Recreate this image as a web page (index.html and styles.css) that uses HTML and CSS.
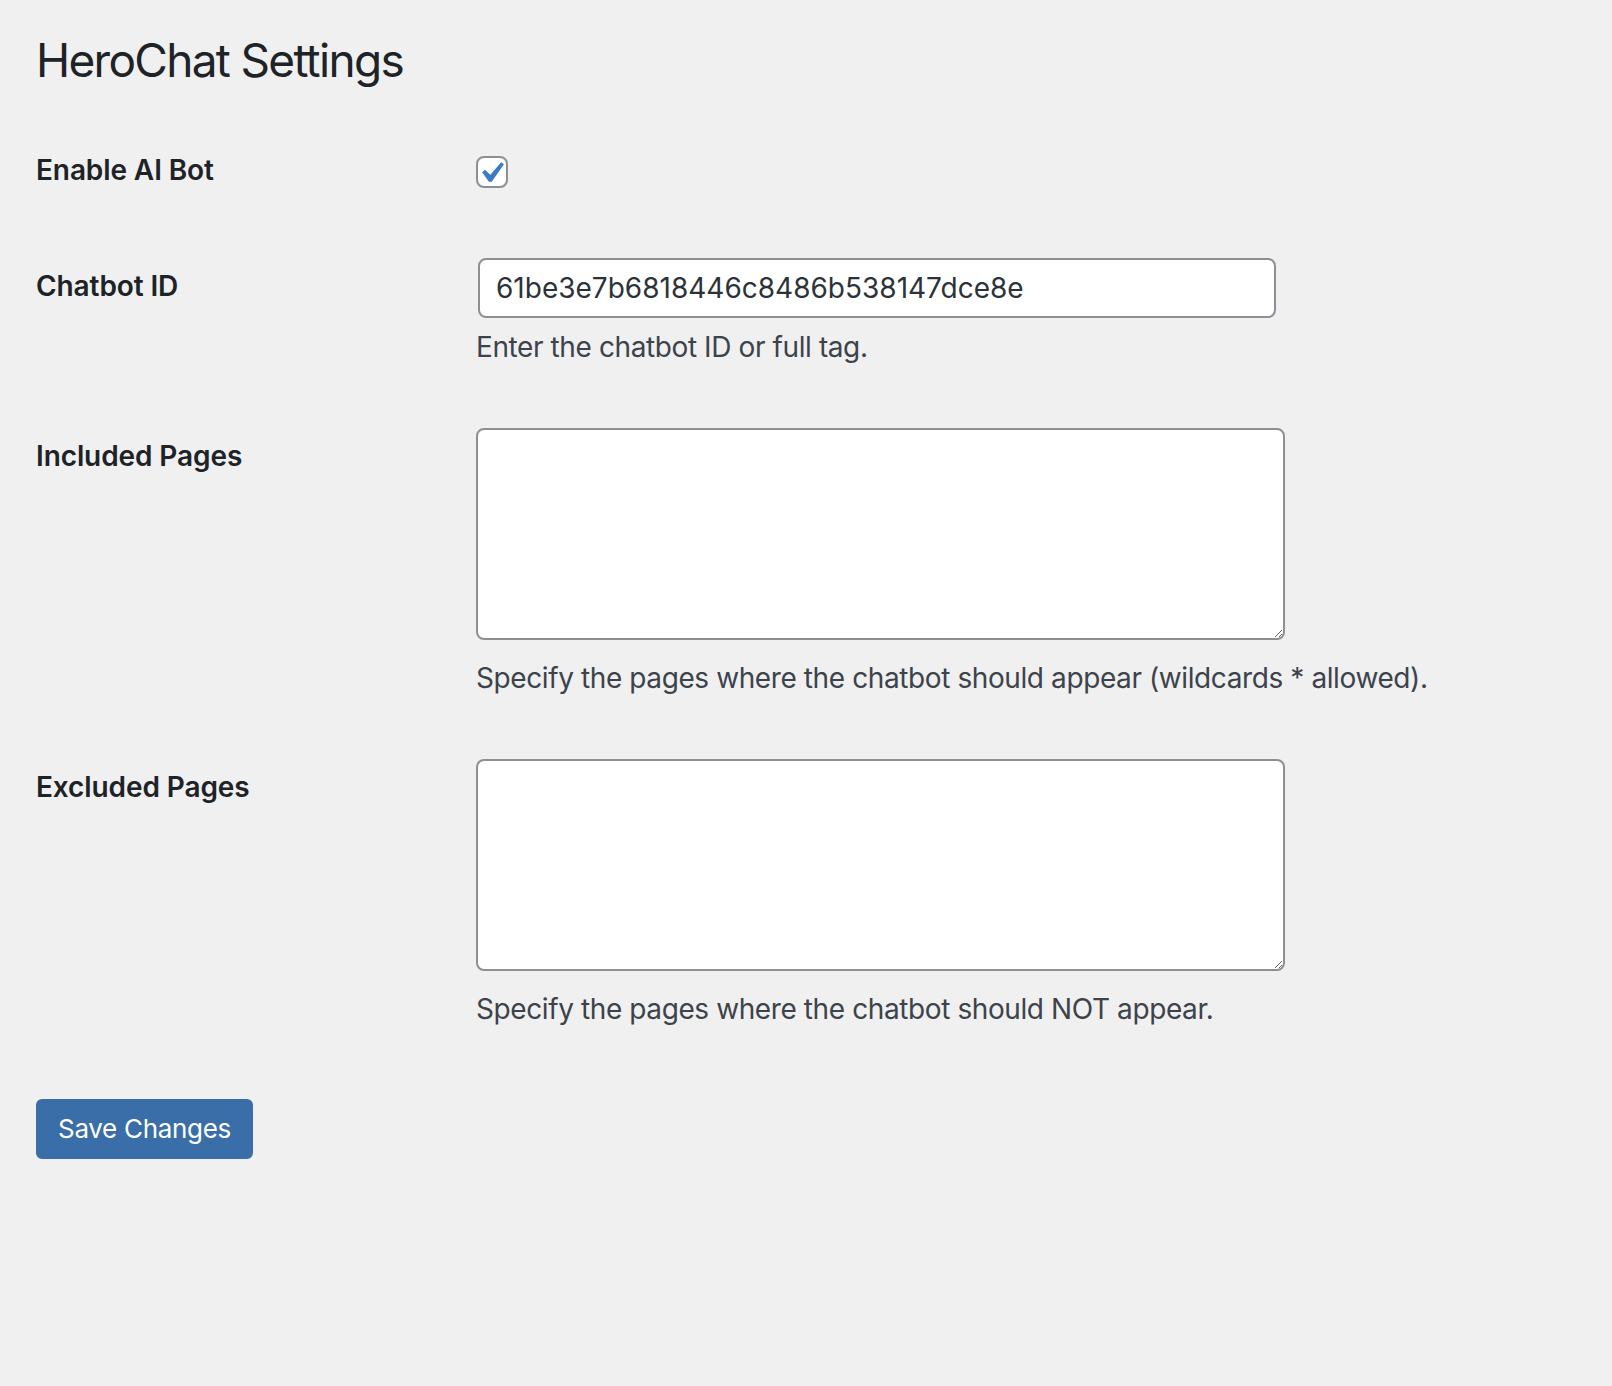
FILE: index.html
```html
<!DOCTYPE html>
<html lang="en">
<head>
<meta charset="utf-8">
<title>HeroChat Settings</title>
<link rel="stylesheet" href="styles.css">
</head>
<body>
<div class="wrap">
  <h1 class="page-title">HeroChat Settings</h1>
  <form class="settings-form">
    <div class="form-table">
      <div class="th"><label>Enable AI Bot</label></div>
      <div class="td">
        <span class="checkbox" role="checkbox" aria-checked="true">
          <svg class="checkmark" viewBox="0 0 20 20" width="42" height="42"><path d="M14.83 4.89l1.34.94-5.81 8.38H9.02L5.78 9.67l1.34-1.25 2.57 2.4z" fill="#3a7bc4"/></svg>
        </span>
      </div>

      <div class="th"><label for="chatbot-id">Chatbot ID</label></div>
      <div class="td">
        <input id="chatbot-id" class="text-input" type="text" value="61be3e7b6818446c8486b538147dce8e">
        <p class="description">Enter the chatbot ID or full tag.</p>
      </div>

      <div class="th"><label for="included">Included Pages</label></div>
      <div class="td">
        <textarea id="included" class="text-area"></textarea>
        <p class="description">Specify the pages where the chatbot should appear (wildcards * allowed).</p>
      </div>

      <div class="th"><label for="excluded">Excluded Pages</label></div>
      <div class="td">
        <textarea id="excluded" class="text-area"></textarea>
        <p class="description">Specify the pages where the chatbot should NOT appear.</p>
      </div>
    </div>
    <p class="submit"><button type="button" class="button-primary">Save Changes</button></p>
  </form>
</div>
</body>
</html>
```

FILE: styles.css
```css
html {
  background: #f0f0f1;
}
body {
  margin: 0;
  background: #f0f0f1;
  color: #1d2327;
  font-family: Inter, "Noto Sans", "Liberation Sans", sans-serif;
  min-height: 1386px;
}
.wrap {
  padding: 0 36px;
}
.page-title {
  margin: 30px 0 0;
  font-size: 46px;
  font-weight: 400;
  line-height: 60px;
  letter-spacing: -1.7px;
  color: #1d2327;
}
.settings-form {
  margin: 22px 0 0;
}
.form-table {
  display: grid;
  grid-template-columns: 420px 1fr;
}
.th {
  padding: 40px 0;
  font-size: 28px;
  font-weight: 600;
  line-height: 36px;
  letter-spacing: -0.1px;
  color: #1d2327;
}
.td {
  padding: 30px 20px;
  font-size: 28px;
  line-height: 36px;
}
.checkbox {
  position: relative;
  display: block;
  width: 28px;
  height: 28px;
  margin-top: 14px;
  border: 2px solid #8c8f94;
  border-radius: 8px;
  background: #fff;
}
.checkmark {
  position: absolute;
  left: -8px;
  top: -6px;
}
.text-input {
  display: block;
  box-sizing: border-box;
  width: 798px;
  height: 60px;
  margin: 0 0 0 2px;
  padding: 0 16px;
  border: 2px solid #8c8f94;
  border-radius: 8px;
  background: #fff;
  font-family: inherit;
  font-size: 28px;
  color: #2c3338;
  outline: none;
}
.text-area {
  display: block;
  box-sizing: border-box;
  width: 809px;
  height: 212px;
  margin: 0 0 17px;
  padding: 4px 16px;
  border: 2px solid #8c8f94;
  border-radius: 8px;
  background: #fff;
  font-family: inherit;
  font-size: 28px;
  color: #2c3338;
  outline: none;
}
.description {
  margin: 8px 0 0;
  font-size: 28px;
  line-height: 42px;
  letter-spacing: -0.4px;
  color: #3c434a;
}
.text-area + .description {
  margin-top: 0;
}
.submit {
  margin: 39px 0 0;
  padding: 0;
}
.button-primary {
  box-sizing: border-box;
  height: 60px;
  padding: 0 20px;
  border: 2px solid #3a6ea9;
  border-radius: 6px;
  background: #3a6ea9;
  color: #fff;
  font-family: inherit;
  font-size: 26px;
  line-height: 56px;
  letter-spacing: -0.3px;
  cursor: pointer;
}
```
